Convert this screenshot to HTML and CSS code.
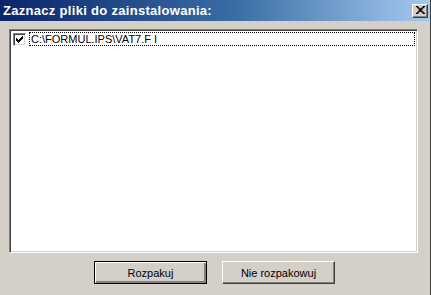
FILE: index.html
```html
<!DOCTYPE html>
<html>
<head>
<meta charset="utf-8">
<link rel="stylesheet" href="styles.css">
</head>
<body>
<div class="window">
  <div class="titlebar">
    <span class="title">Zaznacz pliki do zainstalowania:</span>
    <span class="close">
      <svg width="9" height="8" viewBox="0 0 8 7"><path d="M0 0h2v1h1v1h2v-1h1v-1h2v1h-1v1h-1v1h-1v1h1v1h1v1h1v1h-2v-1h-1v-1h-2v1h-1v1h-2v-1h1v-1h1v-1h1v-1h-1v-1h-1v-1h-1z" fill="#000"/></svg>
    </span>
  </div>
  <div class="content">
    <div class="list">
      <div class="item">
        <span class="check">
          <svg width="7" height="7" viewBox="0 0 7 7"><path d="M0 2h1v1h1v1h1v-1h1v-1h1v-1h1v-1h1v3h-1v1h-1v1h-1v1h-1v1h-1v-1h-1v-1h-1z" fill="#000"/></svg>
        </span>
        <span class="label">C:\FORMUL.IPS\VAT7.F I</span>
      </div>
    </div>
    <div class="buttons">
      <button class="btn default">Rozpakuj</button>
      <button class="btn">Nie rozpakowuj</button>
    </div>
  </div>
</div>
</body>
</html>
```

FILE: styles.css
```css
html, body {
  margin: 0;
  padding: 0;
}
body {
  width: 431px;
  height: 295px;
  background: #d4d0c8;
  overflow: hidden;
  font-family: "Liberation Sans", Arial, sans-serif;
}
.window {
  width: 431px;
  height: 295px;
  display: flex;
  flex-direction: column;
  box-sizing: border-box;
  border-right: 1px solid #404040;
}
.titlebar {
  height: 21px;
  flex: none;
  background: linear-gradient(to right, #0a246a 0%, #3a6ea5 55%, #a6caf0 100%);
  display: flex;
  align-items: center;
  justify-content: space-between;
  padding: 0 2px 0 3px;
}
.title {
  color: #fff;
  font-weight: bold;
  font-size: 13px;
  letter-spacing: 0.3px;
}
.close {
  width: 16px;
  height: 14px;
  box-sizing: border-box;
  background: #d4d0c8;
  border: 1px solid;
  border-color: #fff #404040 #404040 #fff;
  box-shadow: inset -1px -1px 0 #808080;
  display: flex;
  align-items: center;
  justify-content: center;
  padding-bottom: 1px;
}
.content {
  flex: 1;
  display: flex;
  flex-direction: column;
  padding: 8px 12px 0 9px;
}
.list {
  height: 224px;
  box-sizing: border-box;
  background: #fff;
  border: 1px solid;
  border-color: #808080 #fff #fff #808080;
  box-shadow: inset 1px 1px 0 #404040, inset -1px -1px 0 #d4d0c8;
  padding: 2px 2px 0 3px;
}
.item {
  display: flex;
  align-items: center;
  height: 14px;
}
.check {
  width: 13px;
  height: 13px;
  box-sizing: border-box;
  background: #fff;
  border: 1px solid;
  border-color: #808080 #fff #fff #808080;
  box-shadow: inset 1px 1px 0 #404040, inset -1px -1px 0 #d4d0c8;
  display: flex;
  align-items: center;
  justify-content: center;
  flex: none;
}
.label {
  flex: 1;
  margin-left: 3px;
  height: 14px;
  box-sizing: border-box;
  border: 1px dotted #000;
  font-size: 11px;
  line-height: 12px;
  padding-left: 1px;
  color: #000;
}
.buttons {
  display: flex;
  justify-content: center;
  gap: 15px;
  margin-top: 8px;
  padding-left: 2px;
}
.btn {
  width: 113px;
  height: 23px;
  box-sizing: border-box;
  background: #d4d0c8;
  font-family: "Liberation Sans", Arial, sans-serif;
  font-size: 11px;
  color: #000;
  border: 1px solid;
  border-color: #fff #404040 #404040 #fff;
  box-shadow: inset -1px -1px 0 #808080;
  padding: 0;
}
.btn.default {
  border: 1px solid #000;
  box-shadow: inset 1px 1px 0 #fff, inset -2px -2px 0 #808080;
}
```
